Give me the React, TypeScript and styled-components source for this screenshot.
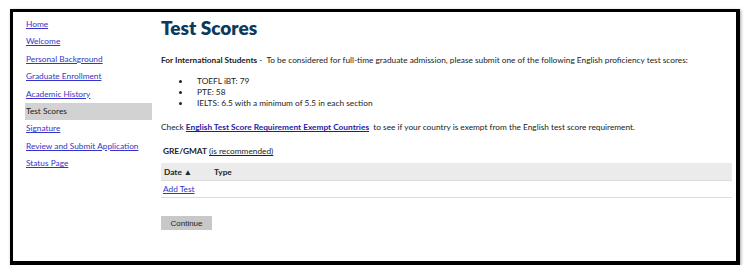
import styled, { createGlobalStyle } from "styled-components";

const GlobalStyle = createGlobalStyle`
  html, body {
    margin: 0;
    padding: 0;
    background: #fff;
  }
  body {
    font-family: Lato, "Liberation Sans", sans-serif;
    font-size: 8.3px;
    color: #222;
  }
`;

const navItems = [
  "Home",
  "Welcome",
  "Personal Background",
  "Graduate Enrollment",
  "Academic History",
  "Test Scores",
  "Signature",
  "Review and Submit Application",
  "Status Page",
];

const scores = [
  "TOEFL iBT: 79",
  "PTE: 58",
  "IELTS: 6.5 with a minimum of 5.5 in each section",
];

function App() {
  return (
    <>
      <GlobalStyle />
      <Frame>
        <Sidebar>
          {navItems.map((item) =>
            item === "Test Scores" ? (
              <NavItem key={item} $active>
                {item}
              </NavItem>
            ) : (
              <NavItem key={item}>
                <NavLink href="#">{item}</NavLink>
              </NavItem>
            )
          )}
        </Sidebar>
        <Main>
          <Title>Test Scores</Title>
          <Intro>
            <strong>For International Students</strong> -&nbsp; To be
            considered for full-time graduate admission, please submit one of
            the following English proficiency test scores:
          </Intro>
          <ScoreList>
            {scores.map((score) => (
              <ScoreItem key={score}>{score}</ScoreItem>
            ))}
          </ScoreList>
          <Intro>
            Check <BoldLink href="#">English Test Score Requirement Exempt Countries</BoldLink>
            &nbsp; to see if your country is exempt from the English test score
            requirement.
          </Intro>
          <SectionLabel>
            <strong>GRE/GMAT</strong> <u>(is recommended)</u>
          </SectionLabel>
          <Table>
            <thead>
              <tr>
                <Th $width="44px">Date ▲</Th>
                <Th>Type</Th>
              </tr>
            </thead>
            <tbody>
              <tr>
                <Td colSpan={2}>
                  <NavLink href="#">Add Test</NavLink>
                </Td>
              </tr>
            </tbody>
          </Table>
          <ContinueButton type="button">Continue</ContinueButton>
        </Main>
      </Frame>
    </>
  );
}

const Frame = styled.div`
  margin: 9px 10px 0 10px;
  width: 730px;
  height: 256px;
  box-sizing: border-box;
  border: 3px solid #000;
  border-right-width: 4px;
  border-bottom-width: 4px;
  box-shadow: 1px 1px 3px rgba(0, 0, 0, 0.35);
  display: flex;
`;

const Sidebar = styled.ul`
  list-style: none;
  margin: 0;
  padding: 4px 0 0 12px;
  width: 127px;
  flex-shrink: 0;
`;

const NavItem = styled.li<{ $active?: boolean }>`
  height: 17.4px;
  line-height: 17.4px;
  padding-left: 1px;
  background: ${(p) => (p.$active ? "#d2d2d2" : "transparent")};
  color: #222;
  white-space: nowrap;
`;

const NavLink = styled.a`
  color: #3434c8;
  text-decoration: underline;
`;

const Main = styled.div`
  flex: 1;
  min-width: 0;
  padding: 0 4px 0 9px;
`;

const Title = styled.h1`
  margin: 4px 0 0 0;
  font-size: 19px;
  font-weight: 800;
  color: #0d3a5c;
  line-height: 24px;
`;

const Intro = styled.p`
  margin: 14px 0 0 0;
  line-height: 12px;
  white-space: nowrap;
`;

const ScoreList = styled.ul`
  margin: 10px 0 0 0;
  padding: 0;
  list-style: none;
  & + p {
    margin-top: 12px;
  }
`;

const ScoreItem = styled.li`
  position: relative;
  padding-left: 36px;
  line-height: 11px;

  &::before {
    content: "";
    position: absolute;
    left: 18px;
    top: 4px;
    width: 3px;
    height: 3px;
    border-radius: 50%;
    background: #222;
  }
`;

const BoldLink = styled.a`
  color: #1c1ca8;
  font-weight: 700;
  text-decoration: underline;
`;

const SectionLabel = styled.div`
  margin: 12px 0 0 2px;
  line-height: 12px;
`;

const Table = styled.table`
  width: 100%;
  margin-top: 6px;
  border-collapse: collapse;
`;

const Th = styled.th<{ $width?: string }>`
  background: #ebebeb;
  text-align: left;
  font-weight: 700;
  height: 17px;
  padding: 0 3px;
  width: ${(p) => p.$width ?? "auto"};
  border-bottom: 1px solid #dcdcdc;
`;

const Td = styled.td`
  height: 16px;
  padding: 0 2px;
  border-bottom: 1px solid #dcdcdc;
`;

const ContinueButton = styled.button`
  margin-top: 18px;
  width: 51px;
  height: 14px;
  padding: 0;
  border: none;
  background: #c8c8c8;
  color: #222;
  font-family: "Liberation Sans", Arial, sans-serif;
  font-size: 8px;
`;

export default App;
